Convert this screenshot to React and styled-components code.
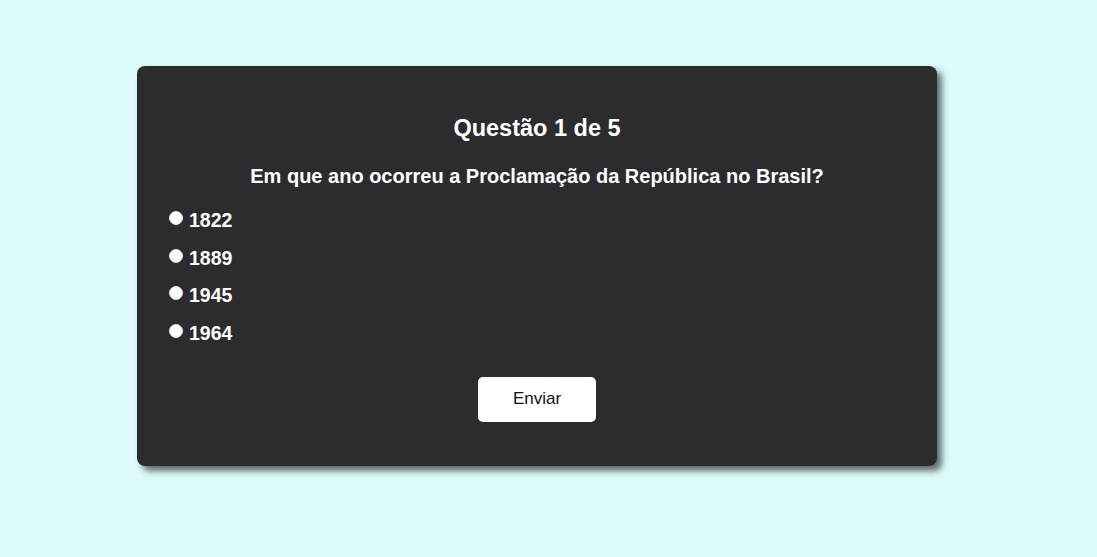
import React, { useState } from 'react';
import styled, { createGlobalStyle } from 'styled-components';

const GlobalStyle = createGlobalStyle`
  html, body {
    margin: 0;
    padding: 0;
    background: #dcfafa;
    font-family: "Liberation Sans", Arial, sans-serif;
  }
`;

const Page = styled.div`
  min-height: 557px;
  padding: 66px 23px 0 0;
  box-sizing: border-box;
`;

const Card = styled.div`
  width: 800px;
  height: 400px;
  margin: 0 auto;
  box-sizing: border-box;
  padding: 48px 32px 0;
  background: #2c2c2e;
  border-radius: 8px;
  box-shadow: 5px 5px 6px rgba(60, 60, 60, 0.75);
  color: #fff;
  display: flex;
  flex-direction: column;
`;

const Title = styled.h2`
  margin: 0;
  font-size: 23.5px;
  font-weight: bold;
  text-align: center;
  line-height: 28px;
`;

const Question = styled.h3`
  margin: 22px 0 21px;
  font-size: 20px;
  font-weight: bold;
  text-align: center;
  line-height: 24px;
`;

const Options = styled.div`
  display: flex;
  flex-direction: column;
  gap: 15.5px;
`;

const Option = styled.label`
  display: flex;
  align-items: center;
  font-size: 19.5px;
  font-weight: bold;
  line-height: 22px;
  cursor: pointer;
`;

const Radio = styled.input`
  appearance: none;
  margin: 0 6px 0 0;
  width: 14px;
  height: 14px;
  border-radius: 50%;
  background: #fff;
  border: 1px solid #e4e4e4;
  box-sizing: border-box;
  position: relative;
  top: -2px;
  cursor: pointer;

  &:checked {
    background: radial-gradient(circle, #1a73e8 0 3px, #fff 3.5px);
  }
`;

const Actions = styled.div`
  display: flex;
  justify-content: center;
  margin-top: 33px;
`;

const SubmitButton = styled.button`
  width: 118px;
  height: 45px;
  background: #fff;
  color: #111;
  border: none;
  border-radius: 5px;
  font-family: "Liberation Sans", Arial, sans-serif;
  font-size: 17px;
  cursor: pointer;
`;

const answers = ['1822', '1889', '1945', '1964'];

export default function App() {
  const [choice, setChoice] = useState(null);

  return (
    <Page>
      <GlobalStyle />
      <Card>
        <Title>Questão 1 de 5</Title>
        <Question>Em que ano ocorreu a Proclamação da República no Brasil?</Question>
        <Options>
          {answers.map((year) => (
            <Option key={year}>
              <Radio
                type="radio"
                name="answer"
                value={year}
                checked={choice === year}
                onChange={() => setChoice(year)}
              />
              {year}
            </Option>
          ))}
        </Options>
        <Actions>
          <SubmitButton>Enviar</SubmitButton>
        </Actions>
      </Card>
    </Page>
  );
}
